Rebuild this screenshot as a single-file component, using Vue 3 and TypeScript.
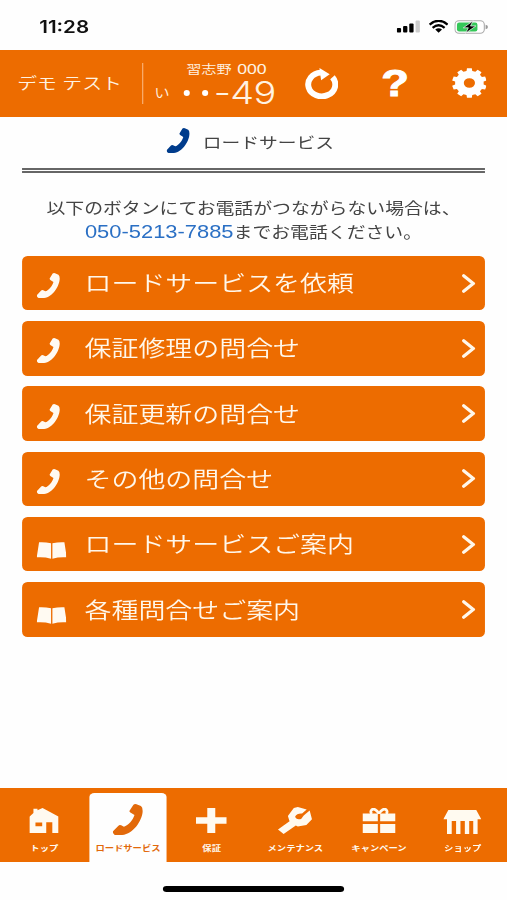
<script setup lang="ts">
type IconName = 'phone' | 'book' | 'home' | 'plus' | 'wrench' | 'gift' | 'shop'

interface Action {
  label: string
  icon: IconName
}

interface Tab extends Action {
  active?: boolean
}

const boxes: Record<IconName, string> = {
  phone: '0 0 88 90',
  book: '0 0 90 52',
  home: '0 0 86 74',
  plus: '0 0 93 73',
  wrench: '0 0 103 79',
  gift: '0 0 99 72',
  shop: '0 0 113 70',
}

const shapes: Record<IconName, string> = {
  phone:
    'M61 2Q65-1 70 1L83 6Q88 9 88 20C88 45 62 87 28 90Q14 91 5 89Q-1 84 1 79L17 63Q20 60 25 62L33 66C46 62 60 46 64 32L52 25Q48 22 50 19Z',
  book: 'M7 1Q25 0 43 4V51Q22 45 0 47ZM47 4Q65 0 83 1L90 47Q68 45 47 51Z',
  home: 'M0 26L12 15V2H24V7L39 0L86 25V74H68V42H50V74H0ZM18 43V54H38V43Z',
  plus: 'M34 0H58V27H93V46H58V73H34V46H0V27H34Z',
  wrench:
    'M30 26L48 3L60 0L87 7L73 19Q57 18 52 28Q55 39 70 35L78 25L96 10L103 36L86 53L60 57L54 54L17 79L0 66L35 42Z',
  gift: 'M0 16H46V38H0ZM53 16H99V38H53ZM0 46H46V72H0ZM53 46H99V72H53Z',
  shop: 'M15 0H98L113 27H102V70H89V32H77V70H64V32H51V70H38V32H25V70H11V27H0Z',
}

const actions: Action[] = [
  { label: 'ロードサービスを依頼', icon: 'phone' },
  { label: '保証修理の問合せ', icon: 'phone' },
  { label: '保証更新の問合せ', icon: 'phone' },
  { label: 'その他の問合せ', icon: 'phone' },
  { label: 'ロードサービスご案内', icon: 'book' },
  { label: '各種問合せご案内', icon: 'book' },
]

const tabs: Tab[] = [
  { label: 'トップ', icon: 'home' },
  { label: 'ロードサービス', icon: 'phone', active: true },
  { label: '保証', icon: 'plus' },
  { label: 'メンテナンス', icon: 'wrench' },
  { label: 'キャンペーン', icon: 'gift' },
  { label: 'ショップ', icon: 'shop' },
]

const TEETH = 10

function gearPath(): string {
  const points: string[] = []
  const step = (Math.PI * 2) / TEETH
  for (let i = 0; i < TEETH; i++) {
    const a = i * step - Math.PI / 2
    const corners: [number, number][] = [
      [-0.32, 41],
      [-0.22, 50],
      [0.22, 50],
      [0.32, 41],
    ]
    for (const [t, r] of corners) {
      points.push(`${(50 + r * Math.cos(a + t * step)).toFixed(2)} ${(50 + r * Math.sin(a + t * step)).toFixed(2)}`)
    }
  }
  return `M${points.join('L')}ZM34 50a16 16 0 1 0 32 0a16 16 0 1 0-32 0Z`
}

const gear = gearPath()
</script>

<template>
  <div class="viewport">
    <div class="screen">
      <div class="status">
        <span class="clock">11:28</span>
        <svg class="signal" viewBox="0 0 24 13" preserveAspectRatio="none">
          <rect x="0" y="8" width="4.3" height="4.5" rx="1" />
          <rect x="6.3" y="6" width="4.3" height="6.5" rx="1" />
          <rect x="12.5" y="3.4" width="4.3" height="9.1" rx="1" />
          <rect x="18.8" y="0.6" width="4.3" height="11.9" rx="1" fill="#ccc" />
        </svg>
        <svg class="wifi" viewBox="0 0 20 13" preserveAspectRatio="none">
          <path d="M1 4.6Q10-3 19 4.6M4 7.8Q10 2.7 16 7.8" fill="none" stroke="#000" stroke-width="2.3" />
          <path d="M6.6 9.6Q10 6.8 13.4 9.6L10 12.8Z" />
        </svg>
        <svg class="battery" viewBox="0 0 34 14" preserveAspectRatio="none">
          <rect x="0.6" y="0.8" width="29.4" height="12.4" rx="4" fill="#fff" stroke="#aaa" stroke-width="1.1" />
          <rect x="2.6" y="2.6" width="20.5" height="8.8" rx="2.2" fill="#35c759" />
          <path d="M31.3 4.7Q33.6 5.2 33.6 7T31.3 9.3Z" fill="#999" />
          <path d="M18.8 0.8L9 7.8H14L11.2 13.2L21.5 6H16.2Z" stroke="#fff" stroke-width="0.7" />
        </svg>
      </div>

      <header class="header">
        <div class="user">デモ テスト</div>
        <div class="plate">
          <div class="region">習志野 <span class="class-code">000</span></div>
          <div class="number"><span class="kana">い</span><span class="dots"><i></i><i></i></span><span class="digits">-49</span></div>
        </div>
        <div class="tools">
          <svg class="refresh" viewBox="0 0 100 94" preserveAspectRatio="none">
            <path d="M83.500 28A41 36 0 1 1 48 14" fill="none" stroke="#fff" stroke-width="18" />
            <path d="M44 0L75 19L49 37Z" fill="#fff" />
          </svg>
          <span class="help">?</span>
          <svg class="gear" viewBox="0 0 100 100" preserveAspectRatio="none">
            <path :d="gear" fill="#fff" fill-rule="evenodd" />
          </svg>
        </div>
      </header>

      <main class="content">
        <h1 class="title">
          <svg class="title-icon" :viewBox="boxes.phone" preserveAspectRatio="none">
            <path :d="shapes.phone" fill="currentColor" />
          </svg>
          <span>ロードサービス</span>
        </h1>

        <p class="notice">
          以下のボタンにてお電話がつながらない場合は、<br />
          <a class="tel">050-5213-7885</a>までお電話ください。
        </p>

        <nav class="actions">
          <button v-for="action in actions" :key="action.label" class="action" type="button">
            <span class="action-icon">
              <svg :class="action.icon" :viewBox="boxes[action.icon]" preserveAspectRatio="none">
                <path :d="shapes[action.icon]" fill="currentColor" />
              </svg>
            </span>
            <span class="action-label">{{ action.label }}</span>
            <svg class="chevron" viewBox="0 0 14 19" preserveAspectRatio="none">
              <path d="M2 1.700L11.600 9.500L2 17.300" fill="none" stroke="currentColor" stroke-width="3.200" stroke-linecap="round" />
            </svg>
          </button>
        </nav>
      </main>

      <nav class="tabs">
        <div v-for="tab in tabs" :key="tab.label" class="tab" :class="{ active: tab.active }">
          <span class="tab-icon">
            <svg :class="tab.icon" :viewBox="boxes[tab.icon]" preserveAspectRatio="none">
              <path :d="shapes[tab.icon]" fill="currentColor" fill-rule="evenodd" />
              <path
                v-if="tab.icon === 'gift'"
                d="M49 16C43 5 34 1 28 5Q22 11 28 17M50 16C56 5 65 1 71 5Q77 11 71 17"
                fill="none"
                stroke="currentColor"
                stroke-width="8"
              />
            </svg>
          </span>
          <span class="tab-label">{{ tab.label }}</span>
        </div>
      </nav>

      <div class="home-bar"><div class="home-indicator"></div></div>
    </div>
  </div>
</template>

<style>
body {
  margin: 0;
  background: #fefefe;
}
</style>

<style scoped>
.viewport {
  width: 507px;
  height: 900px;
  overflow: hidden;
  background: #fefefe;
}

/* A 414pt wide phone layout, widened to fill the viewport. */
.screen {
  --sx: 1.22464;
  width: 414px;
  height: 900px;
  display: flex;
  flex-direction: column;
  transform: scaleX(1.22464);
  transform-origin: 0 0;
  font-family: Inter, 'Noto Sans CJK JP', sans-serif;
  color: #444;
}

svg {
  display: block;
  flex: none;
}

.status {
  height: 50px;
  box-sizing: border-box;
  display: flex;
  align-items: center;
  padding: 3px 0 0 32px;
}

.clock {
  flex: 1;
  font-size: 16.8px;
  font-weight: 600;
  color: #111;
}

.signal {
  width: calc(24px / var(--sx));
  height: 13px;
  margin-right: calc(7px / var(--sx));
}

.wifi {
  width: calc(20px / var(--sx));
  height: 13px;
  margin-right: calc(6px / var(--sx));
}

.battery {
  width: calc(34px / var(--sx));
  height: 14px;
  margin-right: calc(19px / var(--sx));
}

.header {
  height: 66.5px;
  display: flex;
  align-items: center;
  background: #ed6c00;
  color: #fff3e2;
}

.user {
  width: 117px;
  height: 41px;
  box-sizing: border-box;
  padding-left: 14px;
  border-right: 1.5px solid #f9ae70;
  font-size: 16.2px;
  font-weight: 350;
  line-height: 41px;
  white-space: nowrap;
}

.plate {
  width: 110px;
  display: flex;
  flex-direction: column;
  padding-top: 5px;
  font-weight: 350;
  white-space: nowrap;
}

.region {
  padding-left: 35px;
  font-size: 12.4px;
  line-height: 14px;
}

.class-code {
  margin-left: 1px;
  font-family: 'Liberation Sans', sans-serif;
  font-size: 14.4px;
  line-height: 1;
}

.number {
  display: flex;
  align-items: center;
  height: 32px;
  padding-left: 9px;
}

.kana {
  width: 19px;
  margin-top: -3px;
  font-size: 12.6px;
}

.dots {
  display: flex;
  gap: 10px;
  width: 29.5px;
  margin-top: -1px;
  padding-left: 5px;
  box-sizing: border-box;
}

.dots i {
  flex: none;
  width: 5px;
  height: 6px;
  border-radius: 50%;
  background: #fff;
}

.digits {
  font-size: 31px;
  font-weight: 300;
  line-height: 32px;
  letter-spacing: -0.5px;
}

.tools {
  flex: 1;
  display: flex;
  align-items: center;
}

.refresh {
  width: calc(33px / var(--sx));
  height: 31px;
  margin-left: 22.3px;
}

.help {
  width: 72px;
  margin: 1px 0 0 10.3px;
  text-align: center;
  font-family: 'Liberation Sans', sans-serif;
  font-size: 37px;
  font-weight: 700;
  line-height: 40px;
  color: #fff;
  -webkit-text-stroke: 1px #fff;
}

.gear {
  width: calc(35px / var(--sx));
  height: 30px;
  margin-left: 10px;
}

.content {
  flex: 1;
  padding: 0 18px;
}

.title {
  height: 56px;
  box-sizing: border-box;
  margin: 0;
  padding: 0 5px 2px 0;
  display: flex;
  align-items: center;
  justify-content: center;
  gap: 10.5px;
  border-bottom: 5px double #666;
  font-size: 15.3px;
  font-weight: 400;
}

.title-icon {
  width: calc(23px / var(--sx));
  height: 25px;
  margin-top: -1px;
  color: #003c8c;
}

.notice {
  margin: 24.5px 0 0;
  text-align: center;
  font-size: 15.4px;
  line-height: 24px;
  white-space: nowrap;
}

.tel {
  color: #2a6fc4;
  font-family: 'Liberation Sans', sans-serif;
  font-size: 17.9px;
  line-height: 1;
}

.actions {
  display: flex;
  flex-direction: column;
  gap: 10.8px;
  margin-top: 10.8px;
}

.action {
  height: 54.5px;
  display: flex;
  align-items: center;
  border: 0;
  border-radius: 4.5px / 5.5px;
  padding: 0 8px 0 12px;
  background: #ed6c00;
  color: #fff7ea;
  font: inherit;
  font-size: 22px;
  font-weight: 350;
  text-align: left;
}

.action-icon {
  width: 39px;
  padding-top: 5px;
  color: #fffaf2;
}

.action-icon .phone {
  width: calc(23px / var(--sx));
  height: 25px;
}

.action-icon .book {
  width: calc(30px / var(--sx));
  height: 17px;
  margin-top: 7px;
}

.action-label {
  flex: 1;
  line-height: 30px;
}

.chevron {
  width: calc(14px / var(--sx));
  height: 19px;
}

.tabs {
  height: 74px;
  box-sizing: border-box;
  display: grid;
  grid-template-columns: repeat(6, 1fr);
  padding: 5px 2px 0;
  background: #ed6c00;
  color: #fffaf0;
}

.tab {
  display: flex;
  flex-direction: column;
  align-items: center;
  margin: 0 3px;
}

.tab.active {
  border-radius: 4px 4px 0 0;
  background: #fefefe;
  color: #e2690a;
}

.tab-icon {
  height: 49px;
  padding-top: 6px;
  box-sizing: border-box;
  display: flex;
  align-items: center;
}

.home {
  width: calc(29px / var(--sx));
  height: 25px;
}

.tab-icon .phone {
  width: calc(30px / var(--sx));
  height: 31px;
  margin-top: -2px;
}

.plus {
  width: calc(31px / var(--sx));
  height: 25px;
}

.wrench {
  width: calc(34px / var(--sx));
  height: 27px;
}

.gift {
  width: calc(33px / var(--sx));
  height: 25px;
}

.shop {
  width: calc(38px / var(--sx));
  height: 24px;
  margin-top: 3px;
}

.tab-label {
  font-size: 7.6px;
  font-weight: 700;
  line-height: 14px;
  white-space: nowrap;
}

.home-bar {
  height: 38px;
  padding-top: 23.500px;
  box-sizing: border-box;
}

.home-indicator {
  width: 148px;
  height: 6px;
  margin: 0 auto;
  border-radius: 3px;
  background: #000;
}
</style>
